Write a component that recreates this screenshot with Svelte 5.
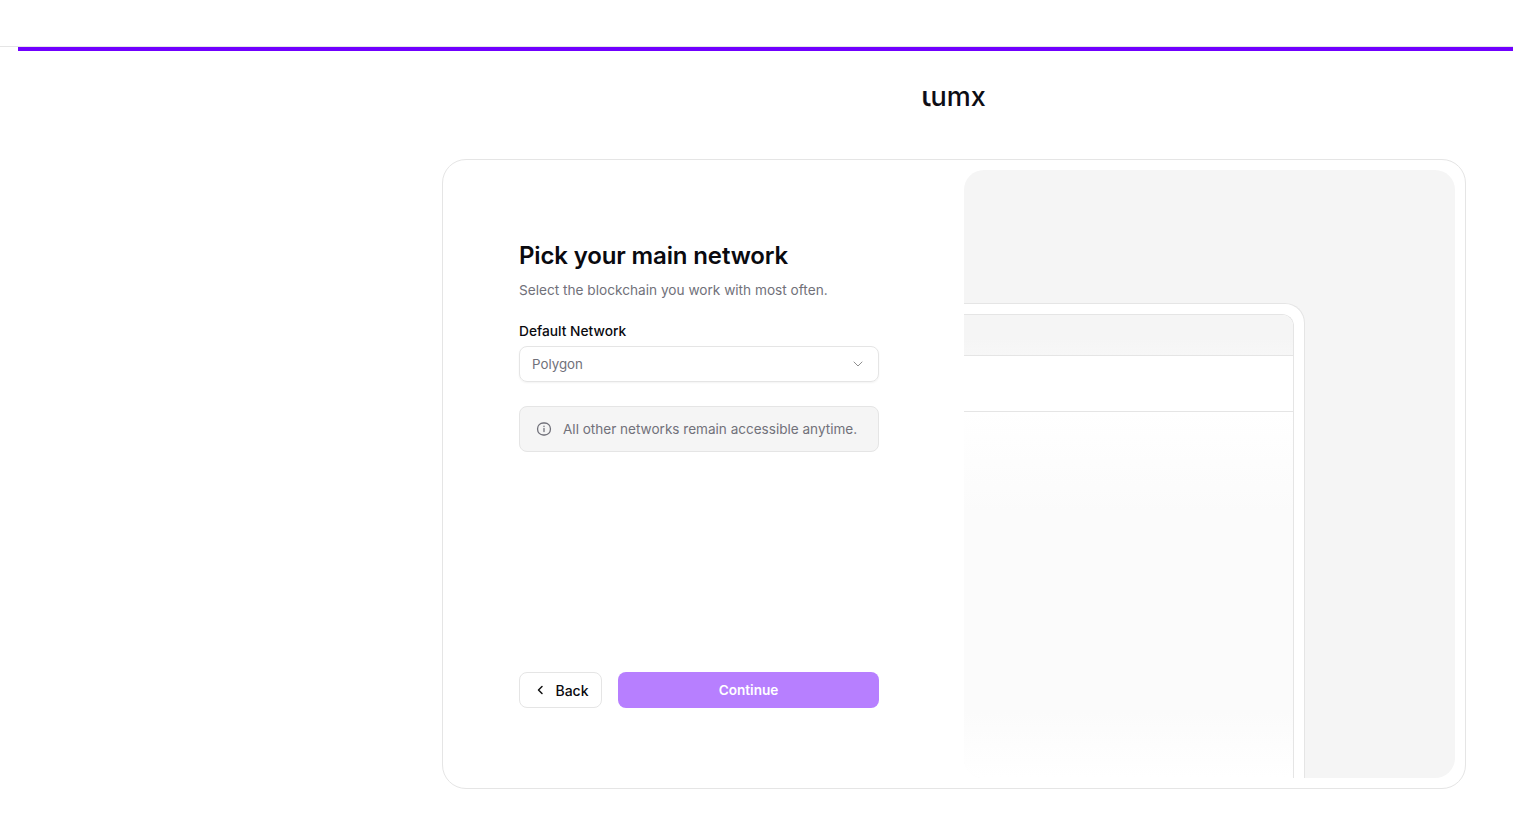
<script>
  let network = 'Polygon';
</script>

<div class="page">
  <div class="topbar"><div class="progress"></div></div>
  <main class="main">
    <div class="logo"><span class="tail">l</span>umx</div>
    <section class="card">
      <div class="left">
        <div class="form">
          <h1>Pick your main network</h1>
          <p class="sub">Select the blockchain you work with most often.</p>
          <div class="label">Default Network</div>
          <div class="select">
            <span>{network}</span>
            <svg width="16" height="16" viewBox="0 0 16 16" fill="none" stroke="#8f8f8f" stroke-width="1" stroke-linecap="round" stroke-linejoin="round"><path d="M4 6l4 4 4-4" /></svg>
          </div>
          <div class="notice">
            <svg width="16" height="16" viewBox="0 0 16 16" fill="none" stroke="#71717a" stroke-width="1.3" stroke-linecap="round"><rect x="1.6" y="2" width="12.8" height="12" rx="5.6" /><path d="M8 7.6v3" /><path d="M8 5.2v.3" /></svg>
            <span>All other networks remain accessible anytime.</span>
          </div>
        </div>
        <div class="actions">
          <button class="back">
            <svg width="16" height="16" viewBox="0 0 16 16" fill="none" stroke="#111" stroke-width="1.5" stroke-linecap="round" stroke-linejoin="round"><path d="M10 4.5L6.5 8l3.5 3.5" /></svg>
            Back
          </button>
          <button class="continue">Continue</button>
        </div>
      </div>
      <div class="panel">
        <div class="device">
          <div class="table">
            <div class="thead"></div>
            <div class="row"></div>
            <div class="rest"></div>
          </div>
        </div>
      </div>
    </section>
  </main>
</div>

<style>
  :global(body) {
    margin: 0;
    background: #fff;
    font-family: Inter, "Liberation Sans", sans-serif;
  }
  .page {
    height: 824px;
    overflow: hidden;
  }
  .topbar {
    height: 46px;
    border-bottom: 1px solid #e5e5e5;
    position: relative;
  }
  .progress {
    position: absolute;
    left: 18px;
    right: 0;
    top: 47px;
    height: 4px;
    background: #7000ff;
  }
  .main {
    padding-left: 395px;
    display: flex;
    flex-direction: column;
    align-items: center;
  }
  .logo {
    margin-top: 28px;
    height: 40px;
    line-height: 40px;
    font-size: 27px;
    font-weight: 500;
    color: #0d0d14;
  }
  /* logo's l sits at x-height with a foot, so clip the top of a tailed l */
  .tail {
    display: inline-block;
    font-family: "DejaVu Sans Mono", monospace;
    font-size: 32px;
    font-weight: 400;
    letter-spacing: -5px;
    margin-left: -6px;
    -webkit-text-stroke: 0.4px #0d0d14;
    clip-path: inset(16px 0 0 0);
  }
  .card {
    margin-top: 44px;
    width: 1024px;
    height: 630px;
    box-sizing: border-box;
    border: 1px solid #e5e5e5;
    border-radius: 24px;
    padding: 10px;
    display: flex;
  }
  .left {
    width: 511px;
    box-sizing: border-box;
    padding: 70px 85px 70px 66px;
    display: flex;
    flex-direction: column;
    justify-content: space-between;
  }
  h1 {
    margin: 0;
    font-size: 24px;
    line-height: 32px;
    font-weight: 600;
    letter-spacing: -0.14px;
    color: #0a0a0f;
  }
  .sub {
    margin: 8px 0 0;
    font-size: 13.65px;
    line-height: 20px;
    color: #71717a;
  }
  .label {
    margin-top: 21px;
    font-size: 13.75px;
    line-height: 20px;
    font-weight: 500;
    color: #0a0a0f;
  }
  .select {
    margin-top: 5px;
    height: 36px;
    box-sizing: border-box;
    border: 1px solid #e5e5e5;
    border-radius: 8px;
    padding: 0 12px;
    display: flex;
    align-items: center;
    justify-content: space-between;
    font-size: 13.3px;
    color: #71717a;
    box-shadow: 0 1px 2px rgba(0, 0, 0, 0.05);
  }
  .notice {
    margin-top: 24px;
    height: 46px;
    box-sizing: border-box;
    border: 1px solid #e5e5e5;
    border-radius: 8px;
    background: #f5f5f5;
    padding: 0 16px;
    display: flex;
    align-items: center;
    gap: 11px;
    font-size: 13.55px;
    color: #71717a;
  }
  .actions {
    display: flex;
    gap: 16px;
  }
  button {
    height: 36px;
    border-radius: 8px;
    font-family: inherit;
    font-size: 14px;
    font-weight: 500;
    display: flex;
    align-items: center;
    justify-content: center;
  }
  .back {
    width: 83px;
    background: #fff;
    border: 1px solid #e5e5e5;
    color: #0a0a0f;
    gap: 7px;
    padding: 0;
  }
  .continue {
    flex: 1;
    border: none;
    background: #b77fff;
    color: #fff;
    font-size: 13.6px;
    font-weight: 600;
  }
  .panel {
    flex: 1;
    background: #f5f5f5;
    border-radius: 20px;
    padding: 133px 150px 0 0;
    display: flex;
    overflow: hidden;
  }
  .device {
    flex: 1;
    margin-left: -24px;
    background: #fff;
    border: 1px solid #e5e5e5;
    border-bottom: none;
    border-radius: 20px 20px 0 0;
    padding: 10px 10px 0 0;
    display: flex;
  }
  .table {
    flex: 1;
    border: 1px solid #e5e5e5;
    border-bottom: none;
    border-radius: 12px 12px 0 0;
    display: flex;
    flex-direction: column;
    overflow: hidden;
  }
  .thead {
    height: 40px;
    background: linear-gradient(#f5f5f5 60%, #f7f7f7);
    border-bottom: 1px solid #e5e5e5;
  }
  .row {
    height: 55px;
    background: #fff;
    border-bottom: 1px solid #e5e5e5;
  }
  .rest {
    flex: 1;
    background: linear-gradient(#fff 0, #fbfbfb 100px, #fbfbfb 300px, #fff 100%);
  }
</style>
